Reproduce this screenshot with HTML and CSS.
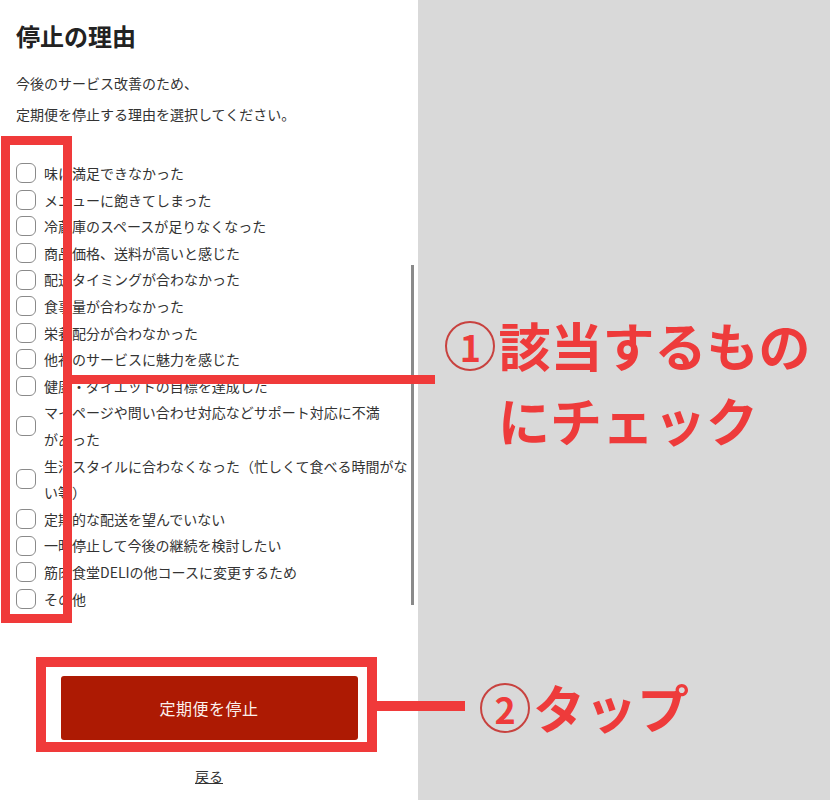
FILE: index.html
```html
<!DOCTYPE html>
<html lang="ja">
<head>
<meta charset="utf-8">
<title>停止の理由</title>
<link rel="stylesheet" href="styles.css">
</head>
<body>
<div class="page">
  <main class="panel">
    <h1 class="title">停止の理由</h1>
    <p class="lead">今後のサービス改善のため、<br>定期便を停止する理由を選択してください。</p>
    <ul class="options">
      <li class="opt"><span class="box"></span><span class="opt-text">味に満足できなかった</span></li>
      <li class="opt"><span class="box"></span><span class="opt-text">メニューに飽きてしまった</span></li>
      <li class="opt"><span class="box"></span><span class="opt-text">冷蔵庫のスペースが足りなくなった</span></li>
      <li class="opt"><span class="box"></span><span class="opt-text">商品価格、送料が高いと感じた</span></li>
      <li class="opt"><span class="box"></span><span class="opt-text">配送タイミングが合わなかった</span></li>
      <li class="opt"><span class="box"></span><span class="opt-text">食事量が合わなかった</span></li>
      <li class="opt"><span class="box"></span><span class="opt-text">栄養配分が合わなかった</span></li>
      <li class="opt"><span class="box"></span><span class="opt-text">他社のサービスに魅力を感じた</span></li>
      <li class="opt"><span class="box"></span><span class="opt-text">健康・ダイエットの目標を達成した</span></li>
      <li class="opt"><span class="box"></span><span class="opt-text">マイページや問い合わせ対応などサポート対応に不満<br>があった</span></li>
      <li class="opt"><span class="box"></span><span class="opt-text">生活スタイルに合わなくなった（忙しくて食べる時間がな<br>い等）</span></li>
      <li class="opt"><span class="box"></span><span class="opt-text">定期的な配送を望んでいない</span></li>
      <li class="opt"><span class="box"></span><span class="opt-text">一時停止して今後の継続を検討したい</span></li>
      <li class="opt"><span class="box"></span><span class="opt-text">筋肉食堂DELIの他コースに変更するため</span></li>
      <li class="opt"><span class="box"></span><span class="opt-text">その他</span></li>
    </ul>
    <div class="actions">
      <button class="stop-btn" type="button">定期便を停止</button>
      <a class="back" href="#">戻る</a>
    </div>
    <div class="scrollbar"></div>
  </main>
  <aside class="side"></aside>

  <div class="mark mark-list"></div>
  <div class="mark-bar bar1"></div>
  <div class="mark mark-btn"></div>
  <div class="mark-bar bar2"></div>
  <div class="callout callout1"><span class="num">1</span>該当するもの<br>にチェック</div>
  <div class="callout callout2"><span class="num">2</span>タップ</div>
</div>
</body>
</html>
```

FILE: styles.css
```css
* { box-sizing: border-box; }

html, body {
  margin: 0;
  padding: 0;
}

body {
  font-family: "Noto Sans CJK JP", "Noto Sans", sans-serif;
  background: #d9d9d9;
}

.page {
  position: relative;
  width: 830px;
  height: 800px;
  display: flex;
  overflow: hidden;
}

.panel {
  position: relative;
  width: 418px;
  height: 800px;
  background: #ffffff;
  padding: 0 16px;
}

.side {
  flex: 1;
  background: #d9d9d9;
}

.title {
  margin: 0;
  padding-top: 20px;
  font-size: 24px;
  line-height: 32px;
  font-weight: 700;
  color: #222222;
}

.lead {
  margin: 16px 0 0;
  font-size: 14px;
  line-height: 31px;
  color: #333333;
}

.options {
  list-style: none;
  margin: 30px 0 0;
  padding: 0;
}

.opt {
  display: flex;
  align-items: center;
  gap: 8px;
  font-size: 14px;
  line-height: 26.6px;
  color: #333333;
}

.box {
  flex: none;
  width: 20px;
  height: 20px;
  border: 1.5px solid #8a8a8a;
  border-radius: 6px;
  background: #ffffff;
}

.opt-text {
  white-space: nowrap;
}

.actions {
  margin-top: 64px;
  display: flex;
  flex-direction: column;
  align-items: center;
}

.stop-btn {
  width: 297px;
  height: 64px;
  border: none;
  border-radius: 3px;
  background: #ad1a03;
  color: #fbefec;
  font-family: inherit;
  font-size: 16px;
  letter-spacing: 0.5px;
}

.back {
  margin-top: 26px;
  font-size: 14px;
  line-height: 20px;
  color: #333333;
  text-decoration: underline;
}

.scrollbar {
  position: absolute;
  left: 411px;
  top: 265px;
  width: 3px;
  height: 340px;
  background: #8a8a8a;
}

/* annotation overlays */
.mark {
  position: absolute;
  border: 9px solid #f03a3a;
}

.mark-list {
  left: 1px;
  top: 136px;
  width: 71px;
  height: 487px;
}

.mark-btn {
  left: 36px;
  top: 657px;
  width: 341px;
  height: 95px;
  border-width: 10px;
}

.mark-bar {
  position: absolute;
  background: #f03a3a;
}

.bar1 {
  left: 72px;
  top: 375px;
  width: 363px;
  height: 9px;
}

.bar2 {
  left: 377px;
  top: 701px;
  width: 88px;
  height: 10px;
}

.callout {
  position: absolute;
  color: #ee3b3b;
  font-weight: 700;
  font-size: 52px;
  white-space: nowrap;
}

.num {
  display: inline-block;
  width: 50px;
  height: 50px;
  margin: 0 3px 0 0;
  border: 2px solid #c8423f;
  border-radius: 50%;
  font-size: 36px;
  line-height: 46px;
  text-align: center;
  vertical-align: 5px;
}

.callout1 {
  left: 422px;
  top: 307px;
  width: 412px;
  text-align: center;
  line-height: 75px;
}

.callout2 {
  left: 480px;
  top: 677px;
  line-height: 60px;
}
```
